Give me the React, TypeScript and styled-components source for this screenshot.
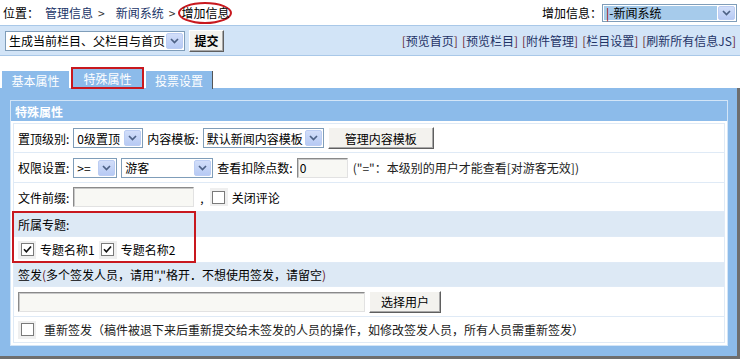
import type { ReactNode } from "react";
import styled, { createGlobalStyle } from "styled-components";

const RED = "#c8181e";
const BLUE = "#8cbbea";

const GlobalStyle = createGlobalStyle`
  body {
    margin: 0;
    background: #fff;
    font-family: "Noto Sans CJK SC", "Liberation Sans", sans-serif;
    font-size: 12px;
    color: #000;
  }
`;

function Select({
  width,
  height = 20,
  highlight,
  children,
}: {
  width: number;
  height?: number;
  highlight?: boolean;
  children: ReactNode;
}) {
  return (
    <SelectBox $width={width} $height={height}>
      <SelectText $highlight={highlight}>{children}</SelectText>
      <SelectArrow>
        <svg width="9" height="6" viewBox="0 0 9 6">
          <path d="M1 1l3.5 3.5L8 1" fill="none" stroke="#4d6185" strokeWidth="1.7" />
        </svg>
      </SelectArrow>
    </SelectBox>
  );
}

function Check({ checked }: { checked?: boolean }) {
  return (
    <CheckWrap>
      <CheckBox>
        {checked && (
          <svg width="9" height="9" viewBox="0 0 9 9">
            <path d="M1 4.2l2.4 2.6L8 1.5" fill="none" stroke="#111" strokeWidth="1.6" />
          </svg>
        )}
      </CheckBox>
    </CheckWrap>
  );
}

export default function App() {
  return (
    <Page>
      <GlobalStyle />
      <TopBar>
        <Crumbs>
          位置：
          <CrumbLink>管理信息</CrumbLink>
          <Sep>&gt;</Sep>
          <CrumbLink>新闻系统</CrumbLink>
          <Sep>&gt;</Sep>
          <Circled>增加信息</Circled>
        </Crumbs>
        <AddTo>
          增加信息：
          <Select width={135} height={18} highlight>
            <RedBar>|</RedBar>-新闻系统
          </Select>
        </AddTo>
      </TopBar>

      <ToolBar>
        <ToolLeft>
          <Select width={180}>生成当前栏目、父栏目与首页</Select>
          <Button $width={35} $bold>
            提交
          </Button>
        </ToolLeft>
        <Links>
          {["预览首页", "预览栏目", "附件管理", "栏目设置", "刷新所有信息JS"].map((l) => (
            <LinkItem key={l}>
              <Bracket>[</Bracket>
              {l}
              <Bracket>]</Bracket>
            </LinkItem>
          ))}
        </Links>
      </ToolBar>

      <Tabs>
        <Tab>基本属性</Tab>
        <Tab $active>特殊属性</Tab>
        <Tab $last>投票设置</Tab>
      </Tabs>

      <Panel>
        <Box>
          <BoxHead>特殊属性</BoxHead>
          <BoxBody>
            <Table>
              <Row $h={29}>
                <Label>置顶级别:</Label>
                <Select width={70}>0级置顶</Select>
                <Label>内容模板:</Label>
                <Select width={121}>默认新闻内容模板</Select>
                <Button $width={106}>管理内容模板</Button>
              </Row>
              <Row $h={30}>
                <Label>权限设置:</Label>
                <Select width={44}>&gt;=</Select>
                <Select width={92}>游客</Select>
                <Label>查看扣除点数:</Label>
                <Input $width={51} defaultValue="0" />
                <Hint>("="：本级别的用户才能查看[对游客无效])</Hint>
              </Row>
              <Row $h={29}>
                <Label>文件前缀:</Label>
                <Input $width={121} />
                <Comma>,</Comma>
                <Check />
                <span>关闭评论</span>
              </Row>
              <Group>
                <Row $h={25} $tint>
                  <Label>所属专题:</Label>
                </Row>
                <Row $h={26}>
                  <Check checked />
                  <span>专题名称1</span>
                  <Check checked />
                  <span>专题名称2</span>
                </Row>
                <Mark />
              </Group>
              <Row $h={24} $tint>
                <span>
                  签发<Bracket>(</Bracket>多个签发人员，请用","格开．不想使用签发，请留空<Bracket>)</Bracket>
                </span>
              </Row>
              <Row $h={30}>
                <Input $width={347} />
                <Button $width={72}>选择用户</Button>
              </Row>
              <Row $h={26}>
                <Check />
                <Note>
                  重新签发（稿件被退下来后重新提交给未签发的人员的操作，如修改签发人员，所有人员需重新签发）
                </Note>
              </Row>
            </Table>
          </BoxBody>
        </Box>
      </Panel>
    </Page>
  );
}

const Page = styled.div`
  width: 740px;
  height: 360px;
  overflow: hidden;
`;

const TopBar = styled.div`
  display: flex;
  align-items: center;
  justify-content: space-between;

  height: 25px;
  padding: 0 3px;
`;

const Crumbs = styled.div`
  display: flex;
  align-items: center;
`;

const CrumbLink = styled.span`
  margin-left: 6px;
  color: #1a3468;
`;

const Sep = styled.span`
  margin: 0 5px;
  color: #333;
`;

const Circled = styled.span`
  display: inline-flex;
  align-items: center;

  height: 18px;
  padding: 0 1px;
  margin-left: -2px;

  border: 2px solid ${RED};
  border-radius: 50%;
`;

const AddTo = styled.div`
  display: flex;
  align-items: center;
`;

const RedBar = styled.span`
  color: #a00000;
`;

const SelectBox = styled.span<{ $width: number; $height: number }>`
  display: inline-flex;
  align-items: stretch;
  flex: none;

  box-sizing: border-box;
  width: ${({ $width }) => $width}px;
  height: ${({ $height }) => $height}px;
  padding: 1px;

  background: #fff;
  border: 1px solid #7f9db9;
`;

const SelectText = styled.span<{ $highlight?: boolean }>`
  display: flex;
  align-items: center;
  flex: 1;
  min-width: 0;

  padding-left: 2px;
  white-space: nowrap;

  background: ${({ $highlight }) => ($highlight ? "#a6cbeb" : "transparent")};
`;

const SelectArrow = styled.span`
  display: flex;
  align-items: center;
  justify-content: center;
  flex: none;

  width: 15px;
  margin-left: 1px;

  background: linear-gradient(#d2def9, #b7caf4);
  border: 1px solid #bccdf3;
  border-radius: 2px;
`;

const Button = styled.span<{ $width: number; $bold?: boolean }>`
  display: inline-flex;
  align-items: center;
  justify-content: center;
  flex: none;

  box-sizing: border-box;
  width: ${({ $width }) => $width}px;
  height: 22px;

  font-weight: ${({ $bold }) => ($bold ? 700 : 400)};

  background: #f3f2ee;
  border: 1px solid;
  border-color: #fff #5f5f5f #5f5f5f #fff;
  box-shadow: inset -1px -1px #a8a8a8;
`;

const ToolBar = styled.div`
  display: flex;
  align-items: center;
  justify-content: space-between;

  box-sizing: border-box;
  height: 31px;
  padding: 0 4px 0 5px;

  background: #d2e4f7;
  border-top: 1px solid #a9c8e8;
  border-bottom: 1px solid #a9c8e8;
`;

const ToolLeft = styled.div`
  display: flex;
  align-items: center;
  gap: 4px;
`;

const Links = styled.div`
  display: flex;
  gap: 4px;

  color: #1f3366;
`;

const LinkItem = styled.span`
  white-space: nowrap;
`;

const Bracket = styled.span`
  color: #6a2430;
`;

const Tabs = styled.div`
  position: relative;
  z-index: 1;

  display: flex;
  align-items: flex-end;
  gap: 2px;

  height: 22px;
  margin: 11px 0 -1px;
  padding-left: 2px;
`;

const Tab = styled.div<{ $active?: boolean; $last?: boolean }>`
  display: flex;
  align-items: ${({ $active }) => ($active ? "flex-start" : "center")};
  justify-content: center;

  box-sizing: border-box;
  width: ${({ $active }) => ($active ? 73 : 67)}px;
  height: ${({ $active }) => ($active ? 22 : 18)}px;
  padding-top: ${({ $active }) => ($active ? 1 : 0)}px;

  color: #fff;
  background: ${BLUE};
  border: ${({ $active }) => ($active ? `2px solid ${RED}` : "none")};
  border-right: ${({ $last }) => ($last ? "1px solid #555" : undefined)};
`;

const Panel = styled.div`
  box-sizing: border-box;
  width: 740px;
  height: 271px;
  padding: 12px 9px 10px 10px;

  background: ${BLUE};
  border-right: 3px solid #6e6e6e;
  border-bottom: 3px solid #6e6e6e;
`;

const Box = styled.div`
  border: 1px solid #d3e5f7;
`;

const BoxHead = styled.div`
  display: flex;
  align-items: center;

  height: 20px;
  padding-left: 4px;

  font-weight: 700;
  color: #fff;
  background: ${BLUE};
`;

const BoxBody = styled.div`
  padding: 2px;
  background: #fff;
`;

const Table = styled.div`
  border: 1px solid #dfeaf6;
  border-bottom: none;
`;

const Group = styled.div`
  position: relative;
`;

const Mark = styled.div`
  position: absolute;
  left: -2px;
  top: -1px;

  width: 184px;
  height: 52px;
  box-sizing: border-box;

  border: 2px solid ${RED};
  pointer-events: none;
`;

const Row = styled.div<{ $h: number; $tint?: boolean }>`
  display: flex;
  align-items: center;
  gap: 4px;

  box-sizing: border-box;
  height: ${({ $h }) => $h}px;
  padding: 0 4px;

  white-space: nowrap;
  background: ${({ $tint }) => ($tint ? "#dde9f5" : "#fff")};
  border-bottom: 1px solid #dfeaf6;
`;

const Label = styled.span`
  flex: none;
`;

const Input = styled.input<{ $width: number }>`
  flex: none;

  box-sizing: border-box;
  width: ${({ $width }) => $width}px;
  height: 20px;
  padding: 0 2px;
  margin: 0;

  font: inherit;
  background: #f8f8f4;
  border: 1px solid;
  border-color: #8a8a8a #e2e2e2 #e2e2e2 #8a8a8a;
  box-shadow: inset 1px 1px #c8c8c8;
  outline: none;
`;

const Hint = styled.span`
  margin-left: 1px;
  color: #222;
`;

const Comma = styled.span`
  margin: 0 2px;
`;

const CheckWrap = styled.span`
  display: inline-flex;
  align-items: center;
  justify-content: center;
  flex: none;

  width: 18px;
  height: 18px;

  background: #efefef;
`;

const CheckBox = styled.span`
  display: flex;
  align-items: center;
  justify-content: center;

  box-sizing: border-box;
  width: 13px;
  height: 13px;

  background: #fff;
  border: 1px solid #7a7a7a;
`;

const Note = styled.span`
  margin-left: 4px;
  color: #1a1a1a;
`;
